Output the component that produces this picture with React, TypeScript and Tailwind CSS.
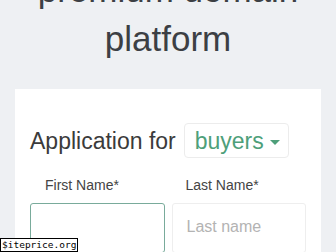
import React from "react";

export default function App() {
  const sans = { fontFamily: '"Liberation Sans", Arial, sans-serif' };
  return (
    <div
      className="relative w-[336px] h-[252px] overflow-hidden bg-[#eef0f3]"
      style={sans}
    >
      <div className="mt-[-35px] text-center text-[35px] leading-[49px] text-[#3c3f44]">
        premium domain
        <br />
        platform
      </div>
      <div className="mx-[15px] mt-[26px] bg-white px-[15px] pt-[34px] pb-[20px]">
        <div className="flex items-center">
          <span className="text-[23px] leading-[28px] text-[#3b3b3b]">
            Application for
          </span>
          <div className="ml-[8px] flex h-[35px] w-[105px] items-center rounded-[4px] border border-[#ececec] pl-[10px]">
            <span className="text-[23px] leading-[28px] text-[#4e9f7a]">
              buyers
            </span>
            <svg
              className="ml-[6px] mt-[3px]"
              width="10"
              height="5"
              viewBox="0 0 10 5"
            >
              <path d="M0 0 L10 0 L5 5 Z" fill="#4e9f7a" />
            </svg>
          </div>
        </div>
        <div className="mt-[17px] grid grid-cols-2 gap-x-[7px]">
          <div className="pl-[15px] text-[14px] leading-[20px] text-[#444]">
            First Name*
          </div>
          <div className="pl-[14px] text-[14px] leading-[20px] text-[#444]">
            Last Name*
          </div>
          <div className="mt-[8px] h-[50px] rounded-[3px] border border-[#79ab9b] bg-white" />
          <div className="mt-[8px] flex h-[50px] items-center rounded-[3px] border border-[#eeeeee] bg-white pl-[14px] pb-[2px]">
            <span className="text-[16px] leading-[20px] text-[#b3b3b3]">
              Last name
            </span>
          </div>
        </div>
      </div>
      <div
        className="absolute left-0 bottom-0 h-[14px] border border-black bg-white px-[1px] text-[9.5px] leading-[12px] text-black"
        style={{ fontFamily: '"DejaVu Sans Mono", "Liberation Mono", monospace' }}
      >
        $iteprice.org
      </div>
    </div>
  );
}
